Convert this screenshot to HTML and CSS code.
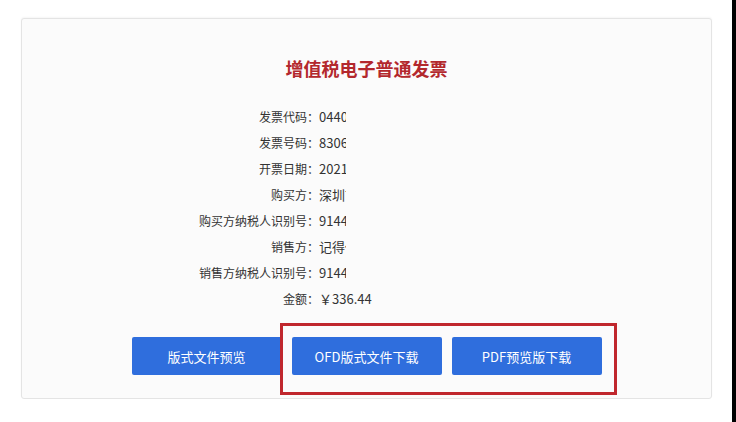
FILE: index.html
```html
<!DOCTYPE html>
<html lang="zh-CN">
<head>
    <meta charset="UTF-8">
    <meta name="viewport" content="width=device-width, initial-scale=1.0">
    <title>增值税电子普通发票</title>
    <link rel="stylesheet" href="styles.css">
</head>
<body>
    <div class="page">
        <div class="screen">
            <div class="invoice-card">
                <h2 class="invoice-title">增值税电子普通发票</h2>

                <div class="info-list">
                    <div class="info-row"><span class="info-label">发票代码：</span><span class="info-value cut">0440</span></div>
                    <div class="info-row"><span class="info-label">发票号码：</span><span class="info-value cut">8306</span></div>
                    <div class="info-row"><span class="info-label">开票日期：</span><span class="info-value cut">2021</span></div>
                    <div class="info-row"><span class="info-label">购买方：</span><span class="info-value cut">深圳市</span></div>
                    <div class="info-row"><span class="info-label">购买方纳税人识别号：</span><span class="info-value cut">9144</span></div>
                    <div class="info-row"><span class="info-label">销售方：</span><span class="info-value cut">记得你</span></div>
                    <div class="info-row"><span class="info-label">销售方纳税人识别号：</span><span class="info-value cut">9144</span></div>
                    <div class="info-row"><span class="info-label">金额：</span><span class="info-value">￥336.44</span></div>
                </div>

                <div class="btn-container">
                    <button type="button" class="btn">版式文件预览</button>
                    <button type="button" class="btn">OFD版式文件下载</button>
                    <button type="button" class="btn">PDF预览版下载</button>
                </div>

                <!-- highlight box drawn over the two download buttons -->
                <div class="highlight"></div>
            </div>
        </div>
        <div class="edge"></div>
    </div>
</body>
</html>
```

FILE: styles.css
```css
/* CSS styles */
html, body {
    margin: 0;
    padding: 0;
    background-color: #fff;
}

body {
    font-family: "Noto Sans CJK SC", "Noto Sans", sans-serif;
    color: #333;
}

.page {
    display: flex;
    height: 422px;
}

.screen {
    flex: 1;
    padding: 18px 20px 0 21px;
}

.edge {
    width: 4px;
    background-color: #000;
}

.invoice-card {
    position: relative;
    height: 379px;
    background-color: #fbfbfb;
    border: 1px solid #e4e4e4;
    border-radius: 3px;
    box-shadow: 0 -1px 2px rgba(0, 0, 0, 0.04);
}

.invoice-title {
    margin: 36px 0 23px;
    text-align: center;
    font-size: 18px;
    line-height: 26px;
    font-weight: bold;
    color: #b3282d;
}

.info-list {
    margin-left: 167px;
}

.info-row {
    display: flex;
    font-size: 12px;
    line-height: 26px;
}

.info-label {
    width: 130px;
    text-align: right;
}

.info-value {
    font-size: 13px;
    color: #333;
    white-space: nowrap;
}

.info-value.cut {
    width: 27px;
    overflow: hidden;
}

.btn-container {
    display: flex;
    justify-content: center;
    gap: 10px;
    margin-top: 25px;
}

.btn {
    width: 150px;
    height: 38px;
    border: none;
    border-radius: 2px;
    background-color: #2f6edd;
    color: #fff;
    font-family: "Noto Sans CJK SC", "Noto Sans", sans-serif;
    font-size: 13px;
    cursor: pointer;
}

.highlight {
    position: absolute;
    left: 258px;
    top: 304px;
    width: 331px;
    height: 66px;
    border: 3px solid #c0272d;
}
```
